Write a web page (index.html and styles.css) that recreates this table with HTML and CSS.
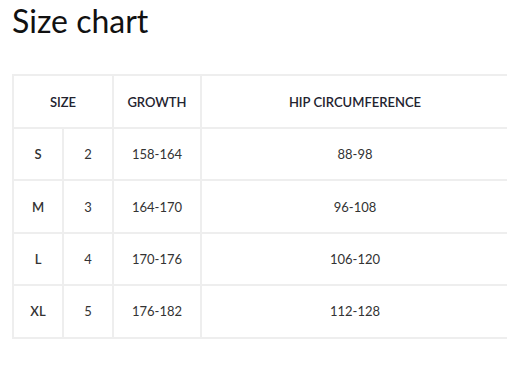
FILE: index.html
```html
<!DOCTYPE html>
<html lang="en">
<head>
    <meta charset="UTF-8">
    <meta name="viewport" content="width=device-width, initial-scale=1.0">
    <link rel="stylesheet" href="styles.css">
    <title>Size chart</title>
</head>
<body>
    <div class="chart-box">
        <h2 class="chart-title">Size chart</h2>
        <table class="size-table">
            <colgroup>
                <col class="col-letter">
                <col class="col-number">
                <col class="col-growth">
                <col class="col-hip">
            </colgroup>
            <thead>
                <tr>
                    <th colspan="2">SIZE</th>
                    <th>GROWTH</th>
                    <th>HIP CIRCUMFERENCE</th>
                </tr>
            </thead>
            <tbody>
                <tr>
                    <td class="size-col">S</td>
                    <td>2</td>
                    <td>158-164</td>
                    <td>88-98</td>
                </tr>
                <tr>
                    <td class="size-col">M</td>
                    <td>3</td>
                    <td>164-170</td>
                    <td>96-108</td>
                </tr>
                <tr>
                    <td class="size-col">L</td>
                    <td>4</td>
                    <td>170-176</td>
                    <td>106-120</td>
                </tr>
                <tr>
                    <td class="size-col">XL</td>
                    <td>5</td>
                    <td>176-182</td>
                    <td>112-128</td>
                </tr>
            </tbody>
        </table>
    </div>
</body>
</html>
```

FILE: styles.css
```css
body {
    margin: 0;
    font-family: Lato, "Liberation Sans", sans-serif;
    color: #333;
    background: #fff;
    overflow: hidden;
}

.chart-box {
    padding: 0 0 0 12px;
}

.chart-title {
    margin: 0;
    padding-top: 1px;
    font-size: 32px;
    font-weight: 400;
    line-height: 40px;
    color: #111;
}

/* size table */
.size-table {
    width: 498px;
    margin-top: 33px;
    border-collapse: collapse;
    table-layout: fixed;
}

.col-letter,
.col-number {
    width: 50px;
}

.col-growth {
    width: 88px;
}

.size-table th,
.size-table td {
    border: 2px solid #eeeeee;
    height: 50.4px;
    padding: 0;
    text-align: center;
    vertical-align: middle;
    font-size: 13px;
}

.size-table th {
    height: 51px;
    font-weight: 600;
    color: #23232f;
}

.size-table td {
    color: #333;
}

.size-table td.size-col {
    font-weight: 600;
}
```
